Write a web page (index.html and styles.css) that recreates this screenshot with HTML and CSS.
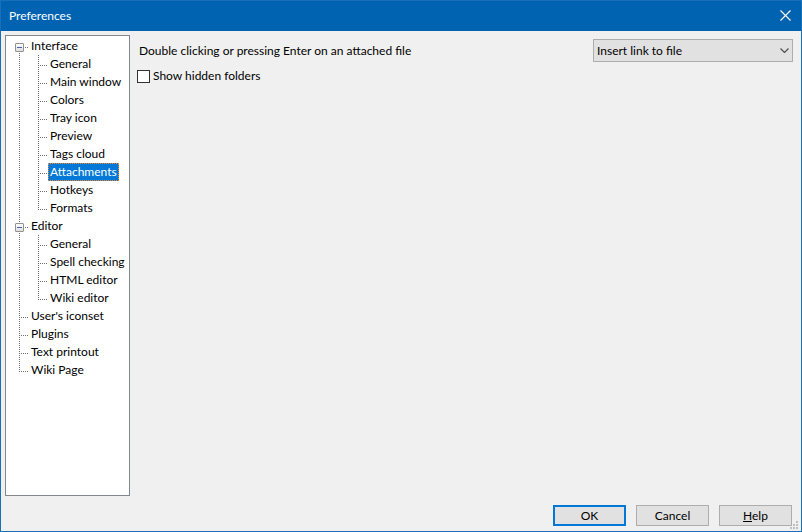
FILE: index.html
```html
<!DOCTYPE html>
<html lang="en">
<head>
<meta charset="utf-8">
<title>Preferences</title>
<link rel="stylesheet" href="styles.css">
</head>
<body>
<div class="window">
  <header class="titlebar">
    <h1 class="title">Preferences</h1>
    <button class="close" type="button" aria-label="Close">
      <svg width="11" height="11" viewBox="0 0 11 11"><path d="M.5.5l10 10M10.5.5l-10 10" fill="none" stroke="#fff" stroke-width="1.1"/></svg>
    </button>
  </header>
  <div class="body">
    <nav class="tree">
      <ul class="root">
        <li>
          <div class="row"><button class="toggle" type="button" aria-label="Collapse"></button><a class="label" href="#">Interface</a></div>
          <ul class="children">
            <li><a class="label" href="#">General</a></li>
            <li><a class="label" href="#">Main window</a></li>
            <li><a class="label" href="#">Colors</a></li>
            <li><a class="label" href="#">Tray icon</a></li>
            <li><a class="label" href="#">Preview</a></li>
            <li><a class="label" href="#">Tags cloud</a></li>
            <li><a class="label selected" href="#">Attachments</a></li>
            <li><a class="label" href="#">Hotkeys</a></li>
            <li><a class="label" href="#">Formats</a></li>
          </ul>
        </li>
        <li>
          <div class="row"><button class="toggle" type="button" aria-label="Collapse"></button><a class="label" href="#">Editor</a></div>
          <ul class="children">
            <li><a class="label" href="#">General</a></li>
            <li><a class="label" href="#">Spell checking</a></li>
            <li><a class="label" href="#">HTML editor</a></li>
            <li><a class="label" href="#">Wiki editor</a></li>
          </ul>
        </li>
        <li><a class="label" href="#">User's iconset</a></li>
        <li><a class="label" href="#">Plugins</a></li>
        <li><a class="label" href="#">Text printout</a></li>
        <li><a class="label" href="#">Wiki Page</a></li>
      </ul>
    </nav>
    <main class="page">
      <div class="setting">
        <label for="action">Double clicking or pressing Enter on an attached file</label>
        <div class="combo">
          <select id="action"><option>Insert link to file</option></select>
          <svg class="chevron" width="9" height="5" viewBox="0 0 9 5"><path d="M.5.5l4 4 4-4" fill="none" stroke="#505050" stroke-width="1.2"/></svg>
        </div>
      </div>
      <div class="check">
        <input type="checkbox" id="hidden-folders">
        <label for="hidden-folders">Show hidden folders</label>
      </div>
    </main>
  </div>
  <footer class="actions">
    <button class="button default" type="button">OK</button>
    <button class="button" type="button">Cancel</button>
    <button class="button" type="button"><u>H</u>elp</button>
    <svg class="grip" width="8" height="8" viewBox="0 0 8 8" fill="#bfbfbf"><path d="M6 0h2v2H6zM3 3h2v2H3zM6 3h2v2H6zM0 6h2v2H0zM3 6h2v2H3zM6 6h2v2H6z"/></svg>
  </footer>
</div>
</body>
</html>
```
FILE: styles.css
```css
* {
  box-sizing: border-box;
}

body {
  margin: 0;
  font: 12px/18px Lato, "Open Sans", sans-serif;
  color: #000;
}

button,
select {
  font: inherit;
  color: inherit;
}

.window {
  display: flex;
  flex-direction: column;
  min-height: 100vh;
  background: #f0f0f0;
  border: 1px solid #1a70b8;
}

.titlebar {
  display: flex;
  align-items: center;
  justify-content: space-between;
  height: 30px;
  padding: 0 10px 0 8px;
  background: #0063b1;
  color: #fff;
}

.title {
  margin: 0;
  font-size: 12px;
  font-weight: 400;
}

.close {
  display: flex;
  padding: 0 0 1px;
  border: 0;
  background: none;
}

.body {
  display: flex;
  flex: 1;
  padding: 4px 8px 0 4px;
}

.tree {
  width: 125px;
  padding-top: 1px;
  background: #fff;
  border: 1px solid #828790;
  overflow: hidden;
  white-space: nowrap;
}

.tree ul {
  margin: 0;
  padding: 0;
  list-style: none;
}

.tree .root {
  margin-left: 13px;
}

.tree .children {
  margin-left: 19px;
}

/* Dotted connectors: a vertical guide and a short branch to each label */
.tree li {
  background-image:
    repeating-linear-gradient(to bottom, #707070 0 1px, transparent 1px 2px),
    repeating-linear-gradient(to right, #707070 0 1px, transparent 1px 2px);
  background-repeat: no-repeat;
  background-position: 0 0, 0 10px;
  background-size: 1px 100%, 9px 1px;
}

.tree .root > li:first-child {
  background-position: 0 10px, 0 10px;
}

.tree li:last-child {
  background-size: 1px 11px, 9px 1px;
}

.row {
  display: flex;
}

.toggle {
  width: 9px;
  height: 9px;
  margin: 6px 5px 0 -4px;
  padding: 0;
  border: 1px solid #919191;
  border-radius: 1px;
  background:
    linear-gradient(#4b63a7, #4b63a7) center / 5px 1px no-repeat,
    linear-gradient(#fff, #ddd);
}

.label {
  display: block;
  width: fit-content;
  height: 18px;
  padding: 0 2px;
  color: inherit;
  text-decoration: none;
}

li > .label {
  margin-left: 10px;
}

.label.selected {
  background: #0078d7;
  color: #fff;
  outline: 1px dotted #ff8728;
  outline-offset: -1px;
}

.page {
  flex: 1;
  padding-left: 7px;
}

.setting {
  display: flex;
  align-items: center;
  justify-content: space-between;
  padding: 4px 0 0 2px;
}

.combo {
  display: grid;
  align-items: center;
  width: 200px;
}

.combo > * {
  grid-area: 1 / 1;
}

.combo select {
  height: 23px;
  padding: 0 3px;
  border: 1px solid #adadad;
  border-radius: 0;
  background: #e1e1e1;
  appearance: none;
}

.chevron {
  justify-self: end;
  margin-right: 4px;
  pointer-events: none;
}

.check {
  display: flex;
  align-items: center;
  gap: 3px;
  margin-top: 5px;
}

.check input {
  width: 13px;
  height: 13px;
  margin: 0;
  border: 1px solid #333;
  background: #fff;
  appearance: none;
}

.actions {
  display: flex;
  justify-content: flex-end;
  gap: 10px;
  padding: 9px 9px 5px;
  position: relative;
}

.button {
  width: 73px;
  height: 21px;
  padding: 0;
  border: 1px solid #adadad;
  background: #e1e1e1;
}

.default {
  border: 2px solid #0078d7;
}

.grip {
  position: absolute;
  right: 3px;
  bottom: 2px;
}
```
